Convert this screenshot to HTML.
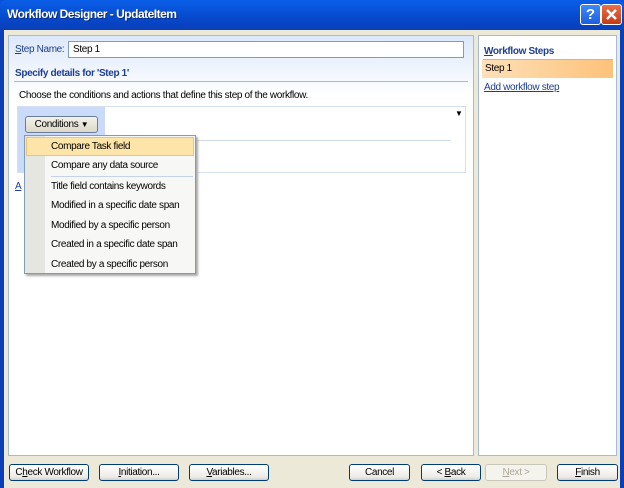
<!DOCTYPE html>
<html><head><meta charset="utf-8"><style>
*{box-sizing:border-box;margin:0;padding:0}
body{width:624px;height:488px;overflow:hidden;font-family:"Liberation Sans",sans-serif;font-size:10px;letter-spacing:-0.35px;color:#000;position:relative;background:#0a4fd8}
.win{position:absolute;left:0;top:0;width:624px;height:488px;background:linear-gradient(#0a5ee8,#0647c8 20px,#0a3fb8 30px);border-radius:6px 6px 0 0}
.title{position:absolute;left:7px;top:7px;color:#fff;font-weight:bold;font-size:12px;text-shadow:1px 1px #0a2a80;letter-spacing:-0.5px}
.tb{position:absolute;top:4px;width:21px;height:21px;border:1px solid #fff;border-radius:3px;color:#fff;font-weight:bold;text-align:center;font-size:15px;line-height:19px;letter-spacing:0}
.body{position:absolute;left:4px;top:30px;width:616px;height:458px;background:#ece9d8}
.lp{position:absolute;left:4px;top:5px;width:466px;height:421px;border:1px solid #a5b9d8;background:linear-gradient(#dce8fb,#fff 60px)}
.rp{position:absolute;left:474px;top:5px;width:139px;height:421px;border:1px solid #a5b9d8;background:#fff}
.a{position:absolute;white-space:nowrap}
.inp{position:absolute;left:59px;top:5px;width:396px;height:17px;border:1px solid #7f9db9;background:#fff;padding:2px 4px}
.hd{color:#1c3f94;font-weight:bold}
.line{position:absolute;height:1px;background:#a5b9d8}
.btn{position:absolute;top:434px;height:17px;border:1px solid #003c74;border-radius:3px;background:linear-gradient(#fff,#ecebe6 80%,#d6d0c5);text-align:center;line-height:15px;white-space:nowrap}
.menu{position:absolute;width:172px;height:139px;border:1px solid #7f9db9;background:#f7f7f5;box-shadow:2px 2px 2px #aaa}
.mi{position:absolute;left:26px;white-space:nowrap}
u{text-decoration:underline}
</style></head><body>
<div class="win">
<div class="title">Workflow Designer - UpdateItem</div>
<div class="tb" style="left:580px;background:linear-gradient(#3c8af8,#1e5de0)">?</div>
<div class="tb" style="left:601px;background:linear-gradient(#e8704a,#c43a14)"><svg width="19" height="19" viewBox="0 0 19 19"><path d="M5 5L14 14M14 5L5 14" stroke="#fff" stroke-width="2.4"/></svg></div>
<div class="body">
<div class="lp">
 <div class="a" style="left:6px;top:8px;color:#1c3f94"><u>S</u>tep Name:</div>
 <div class="inp">Step 1</div>
 <div class="a hd" style="left:6px;top:32px">Specify details for 'Step 1'</div>
 <div class="line" style="left:5px;top:45px;width:454px"></div>
 <div class="a" style="left:10px;top:54px">Choose the conditions and actions that define this step of the workflow.</div>
 <div style="position:absolute;left:8px;top:70px;width:449px;height:67px;border:1px solid #d5e1f2;background:#fff"></div>
 <div style="position:absolute;left:9px;top:71px;width:87px;height:65px;background:#c9dbf8"></div>
 <div class="line" style="left:96px;top:104px;width:346px;background:#cfdcee"></div>
 <div class="a" style="left:446px;top:73px;font-size:8px">▼</div>
 <div style="position:absolute;left:16px;top:80px;width:73px;height:17px;border:1px solid #6a7c9a;border-radius:3px;background:linear-gradient(#f4f2ea,#dcd8c8);text-align:center;line-height:15px;white-space:nowrap">Conditions <span style="font-size:8px">▼</span></div>
 <div class="a" style="left:6px;top:145px;color:#1c3f94;text-decoration:underline">A</div>
</div>
<div class="rp">
 <div class="a hd" style="left:5px;top:10px"><u>W</u>orkflow Steps</div>
 <div class="line" style="left:4px;top:23px;width:130px"></div>
 <div style="position:absolute;left:3px;top:24px;width:131px;height:18px;background:linear-gradient(90deg,#fde0b8,#fdc27a);padding:3px 3px">Step 1</div>
 <div class="a" style="left:5px;top:46px;color:#1c3f94;text-decoration:underline">Add workflow step</div>
</div>
<div class="btn" style="left:5px;width:80px">C<u>h</u>eck Workflow</div>
<div class="btn" style="left:95px;width:80px"><u>I</u>nitiation...</div>
<div class="btn" style="left:185px;width:80px"><u>V</u>ariables...</div>
<div class="btn" style="left:345px;width:61px">Cancel</div>
<div class="btn" style="left:417px;width:60px">&lt; <u>B</u>ack</div>
<div class="btn" style="left:481px;width:62px;border-color:#c9c7ba;color:#aca899;background:#f4f3ee"><u>N</u>ext &gt;</div>
<div class="btn" style="left:553px;width:61px"><u>F</u>inish</div>
</div>
<div class="menu" style="left:24px;top:135px">
 <div style="position:absolute;left:0;top:0;width:20px;height:137px;background:#e6e6e0"></div>
 <div style="position:absolute;left:1px;top:1px;width:168px;height:19px;background:#fde4a8;border:1px solid #f3c278"></div>
 <div class="mi" style="top:5px">Compare Task field</div>
 <div class="mi" style="top:24px">Compare any data source</div>
 <div style="position:absolute;left:26px;top:40px;width:142px;height:1px;background:#c5d3ea"></div>
 <div class="mi" style="top:45px">Title field contains keywords</div>
 <div class="mi" style="top:64px">Modified in a specific date span</div>
 <div class="mi" style="top:84px">Modified by a specific person</div>
 <div class="mi" style="top:103px">Created in a specific date span</div>
 <div class="mi" style="top:123px">Created by a specific person</div>
</div>
</div>
</body></html>
